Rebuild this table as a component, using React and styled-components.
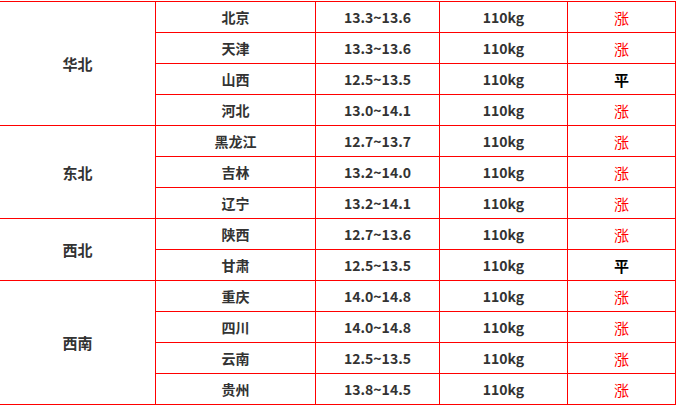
import React from 'react';
import styled, { createGlobalStyle } from 'styled-components';

const regions = [
    {
        name: '华北',
        cities: [
            ['北京', '13.3~13.6', 'up'],
            ['天津', '13.3~13.6', 'up'],
            ['山西', '12.5~13.5', 'flat'],
            ['河北', '13.0~14.1', 'up']
        ]
    },
    {
        name: '东北',
        cities: [
            ['黑龙江', '12.7~13.7', 'up'],
            ['吉林', '13.2~14.0', 'up'],
            ['辽宁', '13.2~14.1', 'up']
        ]
    },
    {
        name: '西北',
        cities: [
            ['陕西', '12.7~13.6', 'up'],
            ['甘肃', '12.5~13.5', 'flat']
        ]
    },
    {
        name: '西南',
        cities: [
            ['重庆', '14.0~14.8', 'up'],
            ['四川', '14.0~14.8', 'up'],
            ['云南', '12.5~13.5', 'up'],
            ['贵州', '13.8~14.5', 'up']
        ]
    }
];

function App() {
    return (
        <>
            <GlobalStyle />
            <Sheet>
                {regions.map((region) => (
                    <React.Fragment key={region.name}>
                        <RegionCell $span={region.cities.length}>{region.name}</RegionCell>
                        {region.cities.map(([city, price, trend]) => (
                            <React.Fragment key={city}>
                                <Cell>{city}</Cell>
                                <Cell>{price}</Cell>
                                <Cell>110kg</Cell>
                                <TrendCell $trend={trend}>{trend === 'up' ? '涨' : '平'}</TrendCell>
                            </React.Fragment>
                        ))}
                    </React.Fragment>
                ))}
            </Sheet>
        </>
    );
}

export default App;

// Styling
const GlobalStyle = createGlobalStyle`
    html, body {
        margin: 0;
        padding: 0;
        background: #fff;
    }
    body {
        font-family: 'Noto Sans CJK SC', 'Liberation Sans', sans-serif;
    }
`;

const Sheet = styled.div`
    display: grid;
    grid-template-columns: 156px 160px 124px 128px 108px;
    grid-auto-rows: 31px;
    width: 676px;
    margin-top: 1px;
    border-top: 1px solid #f00;
`;

const Cell = styled.div`
    display: flex;
    align-items: center;
    justify-content: center;
    box-sizing: border-box;
    border-right: 1px solid #f00;
    border-bottom: 1px solid #f00;
    color: #333;
    font-size: 14px;
    font-weight: 700;
    line-height: 1;
`;

const RegionCell = styled(Cell)`
    grid-column: 1;
    grid-row: span ${(p) => p.$span};
    font-size: 15px;
`;

const TrendCell = styled(Cell)`
    color: ${(p) => (p.$trend === 'up' ? '#f00' : '#000')};
    font-weight: ${(p) => (p.$trend === 'up' ? 400 : 700)};
    font-size: 15px;
`;
